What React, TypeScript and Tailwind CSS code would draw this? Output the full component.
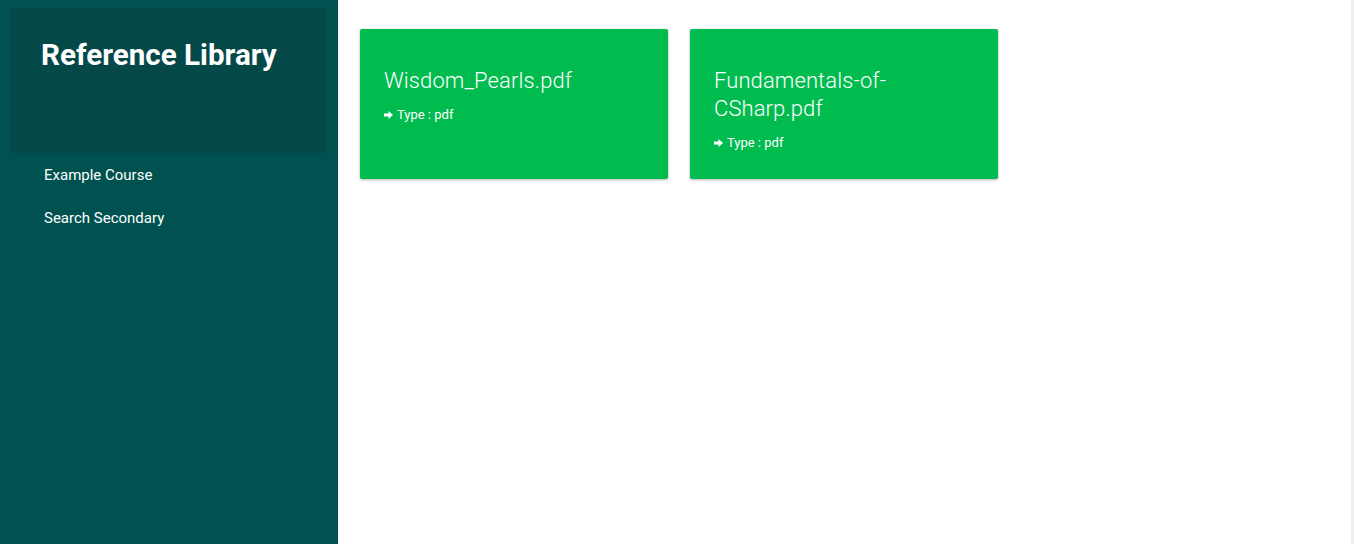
const files = [
  { name: "Wisdom_Pearls.pdf", type: "pdf" },
  { name: "Fundamentals-of-CSharp.pdf", type: "pdf" },
];

function Arrow() {
  return (
    <svg width="9" height="8" viewBox="0 0 9 8" className="inline-block mr-[4px] align-[0px]">
      <path d="M0 2.5h4.5V0L9 4 4.5 8V5.5H0z" fill="white" />
    </svg>
  );
}

export default function App() {
  return (
    <div className="flex h-[544px] w-[1354px] font-['Roboto',sans-serif] bg-white">
      <aside className="w-[338px] shrink-0 bg-[#005250] pt-[8px]">
        <div className="mx-[11px] h-[145px] bg-[#044947] pl-[30px] pt-[33px]">
          <h1 className="text-[29.6px] font-bold text-white leading-none">Reference Library</h1>
        </div>
        <nav className="flex flex-col pl-[44px] pt-[13px] gap-[24px] text-[15px] text-white">
          <a className="leading-[19px]">Example Course</a>
          <a className="leading-[19px]">Search Secondary</a>
        </nav>
      </aside>
      <main className="flex-1 pl-[22px] pt-[29px]">
        <div className="flex gap-[22px] items-start">
          {files.map((f) => (
            <div
              key={f.name}
              className="w-[308px] h-[150px] bg-[#00bc4f] rounded-[2px] shadow-[0_1px_3px_rgba(0,0,0,0.3)] px-[24px] pt-[38px] text-white"
            >
              <div className="text-[22px] font-light leading-[28px] break-words pr-[70px] tracking-[0.1px]">{f.name}</div>
              <div className="text-[13px] mt-[12px] leading-[16px]">
                <Arrow />
                Type : {f.type}
              </div>
            </div>
          ))}
        </div>
      </main>
      <div className="w-[3px] shrink-0 bg-[#eeeeee]" />
    </div>
  );
}
